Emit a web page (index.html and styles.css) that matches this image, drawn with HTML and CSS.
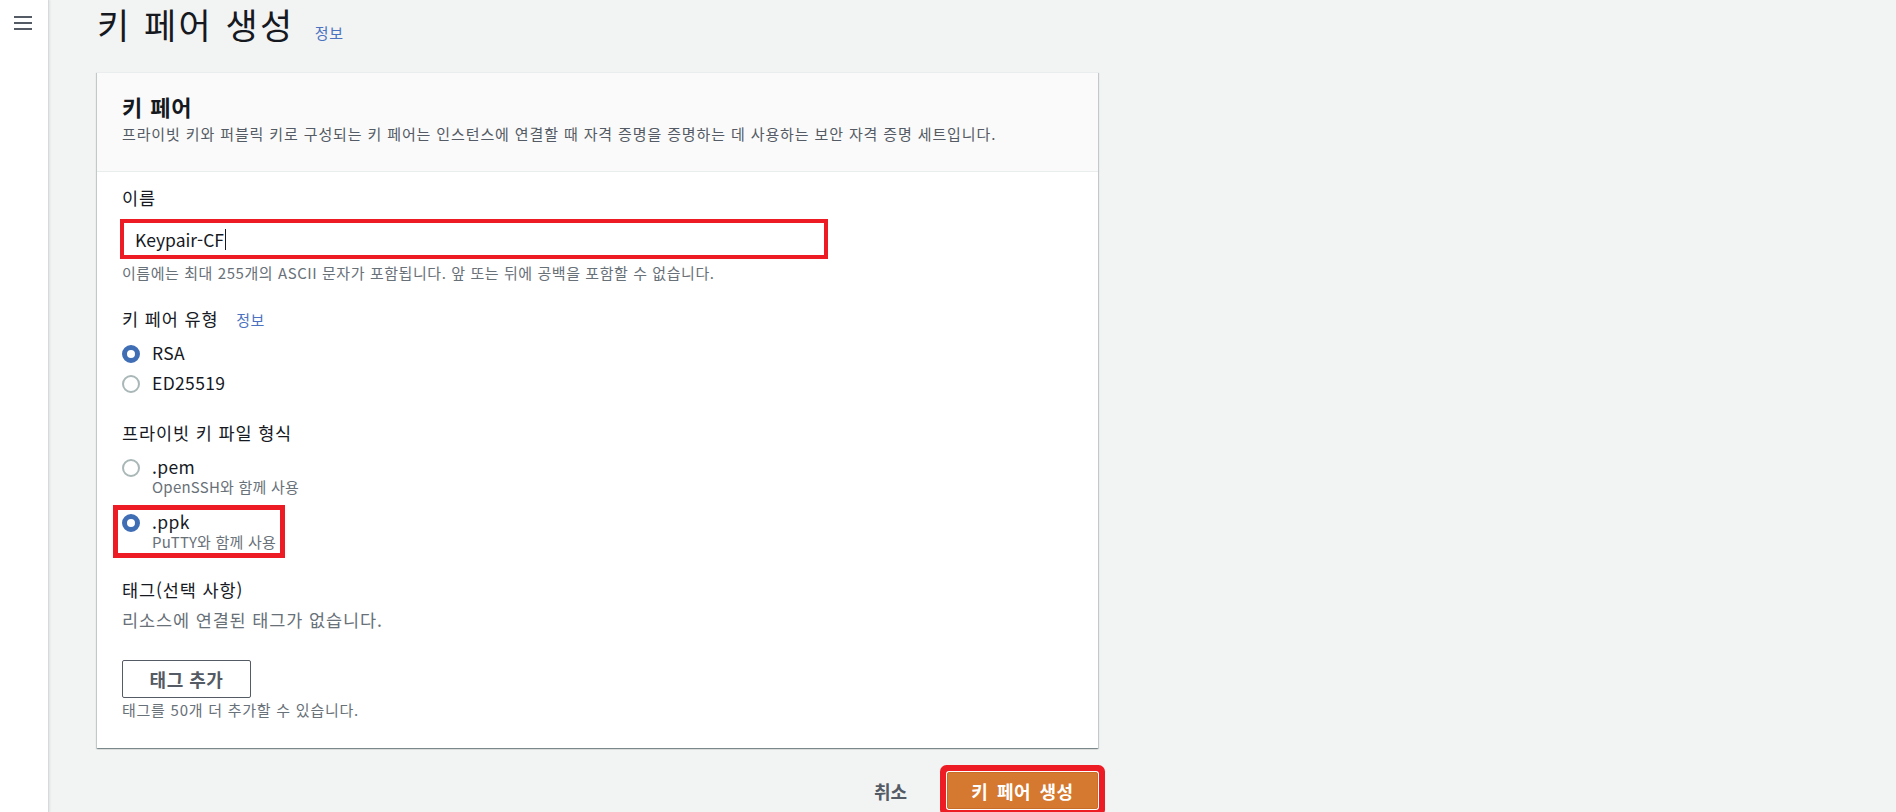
FILE: index.html
```html
<!DOCTYPE html>
<html lang="ko">
<head>
  <meta charset="UTF-8">
  <meta name="viewport" content="width=device-width, initial-scale=1">
  <title>키 페어 생성</title>
  <link rel="stylesheet" href="styles.css">
</head>
<body>
  <div class="app">
    <!-- 왼쪽 내비게이션 -->
    <aside class="sidebar">
      <button class="menu-btn" aria-label="메뉴">
        <svg width="18" height="14" viewBox="0 0 18 14">
          <path d="M0 1h18M0 7h18M0 13h18" stroke="#545b64" stroke-width="2" fill="none"/>
        </svg>
      </button>
    </aside>

    <main class="content">
      <div class="page-title">
        <h1>키 페어 생성</h1>
        <a class="info-link" href="#">정보</a>
      </div>

      <section class="card">
        <div class="card-header">
          <h2>키 페어</h2>
          <p>프라이빗 키와 퍼블릭 키로 구성되는 키 페어는 인스턴스에 연결할 때 자격 증명을 증명하는 데 사용하는 보안 자격 증명 세트입니다.</p>
        </div>

        <div class="card-body">
          <!-- 이름 -->
          <div class="field">
            <label class="field-label">이름</label>
            <div class="text-input marked">
              <span>Keypair-CF</span><span class="caret"></span>
            </div>
            <p class="hint">이름에는 최대 255개의 ASCII 문자가 포함됩니다. 앞 또는 뒤에 공백을 포함할 수 없습니다.</p>
          </div>

          <!-- 키 페어 유형 -->
          <div class="field field-type">
            <label class="field-label">키 페어 유형 <a class="info-link small" href="#">정보</a></label>
            <div class="radio-group">
              <div class="option">
                <span class="radio checked"></span>
                <div class="option-text"><div class="option-title">RSA</div></div>
              </div>
              <div class="option">
                <span class="radio"></span>
                <div class="option-text"><div class="option-title">ED25519</div></div>
              </div>
            </div>
          </div>

          <!-- 파일 형식 -->
          <div class="field field-format">
            <label class="field-label">프라이빗 키 파일 형식</label>
            <div class="radio-group desc">
              <div class="option">
                <span class="radio"></span>
                <div class="option-text">
                  <div class="option-title">.pem</div>
                  <div class="option-sub">OpenSSH와 함께 사용</div>
                </div>
              </div>
              <div class="option marked">
                <span class="radio checked"></span>
                <div class="option-text">
                  <div class="option-title">.ppk</div>
                  <div class="option-sub">PuTTY와 함께 사용</div>
                </div>
              </div>
            </div>
          </div>

          <!-- 태그 -->
          <div class="field field-tags">
            <label class="field-label">태그(선택 사항)</label>
            <p class="empty">리소스에 연결된 태그가 없습니다.</p>
            <button class="btn-normal">태그 추가</button>
            <p class="hint tight">태그를 50개 더 추가할 수 있습니다.</p>
          </div>
        </div>
      </section>

      <div class="actions">
        <button class="btn-link">취소</button>
        <button class="btn-primary">키 페어 생성</button>
      </div>
    </main>
  </div>
</body>
</html>
```

FILE: styles.css
```css
body {
  margin: 0;
  background: #f2f3f3;
  font-family: "Noto Sans CJK KR", "Noto Sans", sans-serif;
  font-size: 17.5px;
  letter-spacing: 0.05em;
  color: #16191f;
}

.app {
  display: flex;
  min-height: 100vh;
}

/* 사이드바 */
.sidebar {
  width: 48px;
  flex-shrink: 0;
  background: #fff;
  border-right: 1px solid #d5dbdb;
  box-shadow: 1px 0 2px rgba(0, 28, 36, 0.08);
}

.menu-btn {
  display: block;
  background: none;
  border: none;
  padding: 16px 0 0 14px;
  cursor: pointer;
}

.menu-btn svg {
  display: block;
}

.content {
  flex: 1;
  padding-left: 48px;
}

/* 페이지 제목 */
.page-title {
  display: flex;
  align-items: baseline;
  padding-top: 3px;
}

h1 {
  margin: 0;
  font-size: 35px;
  font-weight: 400;
  line-height: 42px;
  letter-spacing: 0.07em;
}

.info-link {
  color: #4a72c0;
  font-size: 15px;
  font-weight: 400;
  letter-spacing: 0.04em;
  text-decoration: none;
  margin-left: 20px;
}

.info-link.small {
  margin-left: 12px;
}

/* 카드 */
.card {
  width: 1001px;
  margin-top: 27px;
  background: #fff;
  border-top: 1px solid #eaeded;
  box-shadow: 0 1px 1px 0 rgba(0, 28, 36, 0.3),
              1px 1px 1px 0 rgba(0, 28, 36, 0.15),
              -1px 1px 1px 0 rgba(0, 28, 36, 0.15);
}

.card-header {
  background: #fafafa;
  border-bottom: 1px solid #eaeded;
  padding: 19px 25px 27px;
}

.card-header h2 {
  margin: 0;
  font-size: 22px;
  line-height: 28px;
  font-weight: 700;
}

.card-header p {
  margin: 4px 0 0;
  font-size: 15px;
  line-height: 20px;
  color: #545b64;
}

.card-body {
  padding: 14px 25px 28px;
}

.field-label {
  display: block;
  line-height: 24px;
}

.text-input {
  display: flex;
  align-items: center;
  box-sizing: border-box;
  width: 704px;
  height: 36px;
  margin-top: 11px;
  padding: 0 12px;
  border: 1px solid #aab7b8;
  border-radius: 2px;
  background: #fff;
  letter-spacing: 0;
}

.caret {
  display: inline-block;
  width: 1px;
  height: 21px;
  margin-left: 1px;
  background: #16191f;
}

.hint {
  margin: 6px 0 0;
  font-size: 15px;
  line-height: 20px;
  letter-spacing: 0.038em;
  color: #687078;
}

.hint.tight {
  margin-top: 2px;
  letter-spacing: 0.05em;
}

.field-type {
  margin-top: 24px;
}

.field-format,
.field-tags {
  margin-top: 26px;
}

/* 라디오 */
.radio-group {
  display: flex;
  flex-direction: column;
  gap: 6px;
  margin-top: 9px;
}

.radio-group.desc {
  gap: 14px;
  margin-top: 11px;
}

.option {
  display: flex;
  align-items: flex-start;
  width: fit-content;
}

.radio {
  width: 18px;
  height: 18px;
  box-sizing: border-box;
  border: 2px solid #aab7b8;
  border-radius: 50%;
  background: #fff;
  margin-top: 4px;
  flex-shrink: 0;
}

.radio.checked {
  border: 5px solid #3f6eb5;
}

.option-text {
  margin-left: 12px;
}

.option-title {
  line-height: 24px;
  letter-spacing: 0.02em;
}

.desc .radio {
  margin-top: 3px;
}

.desc .option-title {
  line-height: 21px;
}

.option-sub {
  font-size: 15px;
  line-height: 20px;
  letter-spacing: 0.015em;
  color: #687078;
}

/* 빨간 강조 표시 */
.marked {
  position: relative;
}

.marked::after {
  content: '';
  position: absolute;
  top: -6px;
  bottom: -6px;
  left: -9px;
  right: -9px;
  border: 5px solid #ed1c24;
}

.text-input.marked::after {
  top: -3px;
  bottom: -3px;
  left: -3px;
  right: -3px;
  border-width: 4px;
}

.empty {
  margin: 6px 0 0;
  line-height: 24px;
  color: #687078;
}

/* 버튼 */
.btn-normal {
  display: block;
  width: 129px;
  height: 38px;
  margin-top: 28px;
  background: #fff;
  border: 1px solid #545b64;
  border-radius: 2px;
  color: #545b64;
  font-family: inherit;
  font-size: 18px;
  font-weight: 700;
  letter-spacing: 0.5px;
  cursor: pointer;
}

.actions {
  width: 1001px;
  display: flex;
  justify-content: flex-end;
  align-items: center;
  margin-top: 24px;
}

.btn-link {
  background: none;
  border: none;
  padding: 0;
  margin-right: 40px;
  color: #545b64;
  font-family: inherit;
  font-size: 18px;
  font-weight: 700;
  cursor: pointer;
}

.btn-primary {
  width: 151px;
  height: 37px;
  background: #d57830;
  border: 1px solid #c96d26;
  border-radius: 2px;
  color: #fff;
  font-family: inherit;
  font-size: 18px;
  font-weight: 700;
  letter-spacing: 0.5px;
  word-spacing: 3px;
  cursor: pointer;
  box-shadow: 0 0 0 1px #fff, 0 0 0 7px #ed1c24;
}
```
